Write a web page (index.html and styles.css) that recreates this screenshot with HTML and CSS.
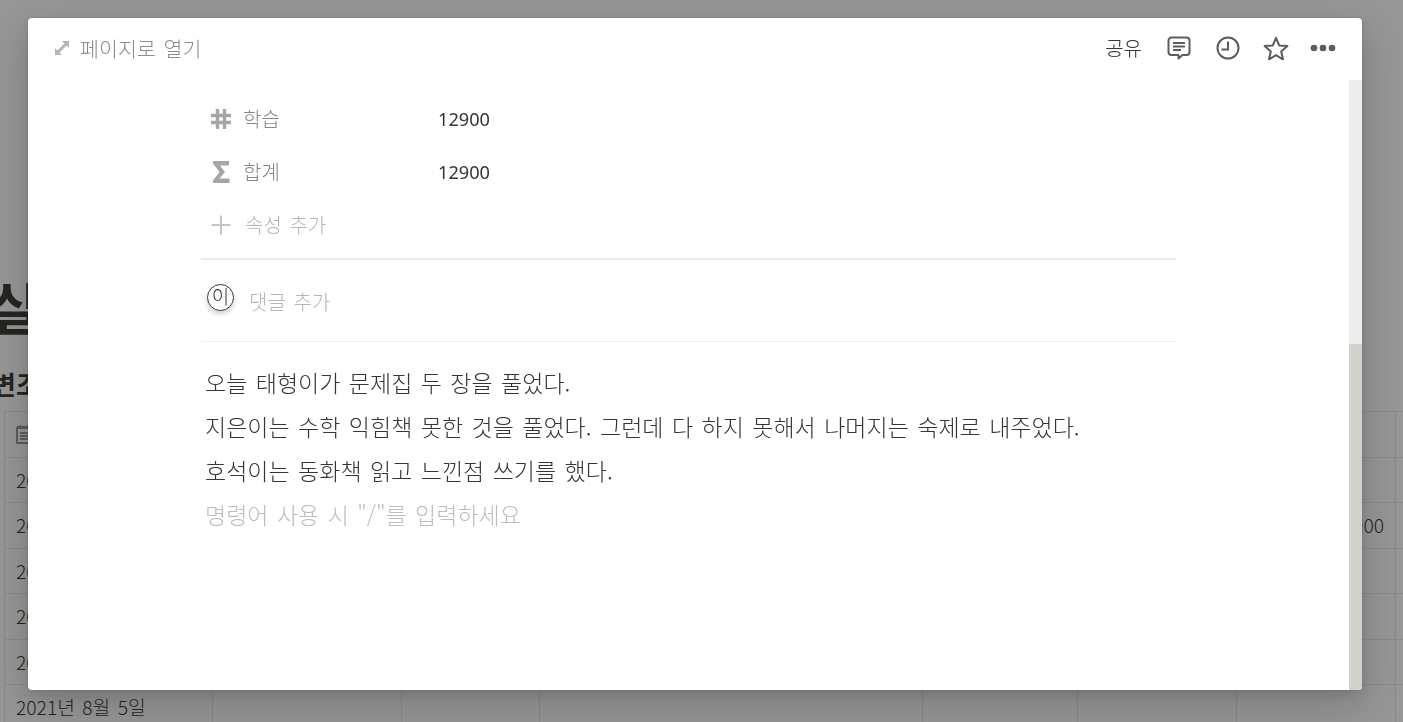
FILE: index.html
```html
<!DOCTYPE html>
<html lang="ko">
<head>
    <meta charset="UTF-8" />
    <title>페이지</title>
    <link rel="stylesheet" href="styles.css">
</head>
<body>

<!-- 뒤쪽 페이지 -->
<div class="page">
    <h1 class="page-title">실</h1>
    <h2 class="page-sub">변조</h2>
    <div class="tbl">
        <div class="tbl-row">
            <div class="tbl-cell">
                <svg class="cal-icon" width="16" height="20" viewBox="0 0 16 20">
                    <path d="M1 4h14v15H1z" fill="none" stroke="#9a9a98" stroke-width="2"/>
                    <path d="M1 3h14M4 1v3M12 1v3M4 9h8M4 12h8M4 15h8" stroke="#9a9a98" stroke-width="2"/>
                </svg>
            </div>
            <div class="tbl-cell"></div><div class="tbl-cell"></div><div class="tbl-cell"></div>
            <div class="tbl-cell"></div><div class="tbl-cell"></div><div class="tbl-cell"></div>
            <div class="tbl-cell"></div>
        </div>
        <div class="tbl-row">
            <div class="tbl-cell">2021년 8월 1일</div>
            <div class="tbl-cell"></div><div class="tbl-cell"></div><div class="tbl-cell"></div>
            <div class="tbl-cell"></div><div class="tbl-cell"></div><div class="tbl-cell"></div>
            <div class="tbl-cell"></div>
        </div>
        <div class="tbl-row">
            <div class="tbl-cell">2021년 8월 2일</div>
            <div class="tbl-cell"></div><div class="tbl-cell"></div><div class="tbl-cell"></div>
            <div class="tbl-cell"></div><div class="tbl-cell"></div>
            <div class="tbl-cell tbl-num">12900</div>
            <div class="tbl-cell"></div>
        </div>
        <div class="tbl-row">
            <div class="tbl-cell">2021년 8월 2일</div>
            <div class="tbl-cell"></div><div class="tbl-cell"></div><div class="tbl-cell"></div>
            <div class="tbl-cell"></div><div class="tbl-cell"></div><div class="tbl-cell"></div>
            <div class="tbl-cell"></div>
        </div>
        <div class="tbl-row">
            <div class="tbl-cell">2021년 8월 3일</div>
            <div class="tbl-cell"></div><div class="tbl-cell"></div><div class="tbl-cell"></div>
            <div class="tbl-cell"></div><div class="tbl-cell"></div><div class="tbl-cell"></div>
            <div class="tbl-cell"></div>
        </div>
        <div class="tbl-row">
            <div class="tbl-cell">2021년 8월 4일</div>
            <div class="tbl-cell"></div><div class="tbl-cell"></div><div class="tbl-cell"></div>
            <div class="tbl-cell"></div><div class="tbl-cell"></div><div class="tbl-cell"></div>
            <div class="tbl-cell"></div>
        </div>
        <div class="tbl-row">
            <div class="tbl-cell">2021년 8월 5일</div>
            <div class="tbl-cell"></div><div class="tbl-cell"></div><div class="tbl-cell"></div>
            <div class="tbl-cell"></div><div class="tbl-cell"></div><div class="tbl-cell"></div>
            <div class="tbl-cell"></div>
        </div>
    </div>
</div>

<div class="scrim"></div>

<!-- 모달 -->
<div class="modal">
    <div class="modal-top">
        <div class="open-page">
            <svg width="16" height="16" viewBox="0 0 16 16">
                <path d="M3.500 12.500L12.500 3.500" stroke="#b4b4b2" stroke-width="3"/>
                <path d="M8 1h7v7zM1 8v7h7z" fill="#b4b4b2"/>
            </svg>
            <span>페이지로 열기</span>
        </div>
        <div class="top-actions">
            <span class="share">공유</span>
            <svg class="comment-icon" width="24" height="24" viewBox="0 0 24 24">
                <path d="M4.500 1.500h15a3 3 0 0 1 3 3v11.500a3 3 0 0 1-3 3h-4l-4 3.500v-3.500h-7a3 3 0 0 1-3-3V4.500a3 3 0 0 1 3-3z" fill="none" stroke="#5c5c5a" stroke-width="2" stroke-linejoin="round"/>
                <path d="M6 7h12M6 10.500h12M6 14h8" stroke="#5c5c5a" stroke-width="1.800"/>
            </svg>
            <svg class="clock-icon" width="24" height="24" viewBox="0 0 24 24">
                <circle cx="12" cy="12" r="10.500" fill="none" stroke="#5c5c5a" stroke-width="2"/>
                <path d="M12 5.500v8H5.500" fill="none" stroke="#5c5c5a" stroke-width="2"/>
            </svg>
            <svg class="star-icon" width="26" height="24" viewBox="0 0 26 24">
                <path d="M13 1.800l3.200 7.600 8.200.7-6.200 5.400 1.900 8-7.100-4.300-7.100 4.300 1.900-8L1.600 10.100l8.200-.7z" fill="none" stroke="#5c5c5a" stroke-width="2" stroke-linejoin="round"/>
            </svg>
            <svg class="dots-icon" width="26" height="8" viewBox="0 0 26 8">
                <circle cx="4" cy="4" r="3.300" fill="#5c5c5a"/>
                <circle cx="13" cy="4" r="3.300" fill="#5c5c5a"/>
                <circle cx="22" cy="4" r="3.300" fill="#5c5c5a"/>
            </svg>
        </div>
    </div>

    <div class="modal-body">
        <div class="content">
            <div class="prop-row">
                <svg class="prop-icon" width="22" height="22" viewBox="0 0 22 22">
                    <path d="M7.500 1v20M14.500 1v20M1 7.500h20M1 14.500h20" stroke="#a6a6a4" stroke-width="3.400"/>
                </svg>
                <span class="prop-name">학습</span>
                <span class="prop-value">12900</span>
            </div>
            <div class="prop-row">
                <svg class="prop-icon" width="22" height="24" viewBox="0 0 22 24">
                    <path d="M3 1h16v4.500H10l5 6.500-5.500 6.500H19.500V23H3v-2.500L9.500 12 3 3.500z" fill="#a6a6a4"/>
                </svg>
                <span class="prop-name">합계</span>
                <span class="prop-value">12900</span>
            </div>
            <div class="prop-row prop-add">
                <svg class="prop-icon" width="22" height="22" viewBox="0 0 22 22">
                    <path d="M11 1.500v19M1.500 11h19" stroke="#c6c6c4" stroke-width="2"/>
                </svg>
                <span class="prop-name">속성 추가</span>
            </div>

            <div class="divider-thick"></div>

            <div class="comment-row">
                <div class="avatar">이</div>
                <span class="comment-hint">댓글 추가</span>
            </div>

            <div class="divider"></div>

            <div class="note">
                <p>오늘 태형이가 문제집 두 장을 풀었다.</p>
                <p>지은이는 수학 익힘책 못한 것을 풀었다. 그런데 다 하지 못해서 나머지는 숙제로 내주었다.</p>
                <p>호석이는 동화책 읽고 느낀점 쓰기를 했다.</p>
                <p class="note-hint">명령어 사용 시 "/"를 입력하세요</p>
            </div>
        </div>
        <div class="scrollbar">
            <div class="scroll-thumb"></div>
        </div>
    </div>
</div>

</body>
</html>
```

FILE: styles.css
```css
html, body {
    height: 100%;
}
body {
    margin: 0;
    overflow: hidden;
    background: #fff;
    color: #37352f;
    font-family: "Noto Sans CJK KR", "Noto Sans", sans-serif;
    font-weight: 300;
}

/* 뒤쪽 페이지 */
.page {
    padding-top: 275px;
}
.page-title {
    margin: 0 0 0 -11px;
    font-size: 55px;
    line-height: 60px;
    font-weight: 700;
}
.page-sub {
    margin: 31px 0 0 -8px;
    font-size: 26px;
    line-height: 36px;
    font-weight: 700;
}
.tbl {
    margin: 9px 0 0 4px;
    width: 1500px;
    border-top: 1px solid #e9e9e7;
}
.tbl-row {
    display: grid;
    grid-template-columns: 208px 189px 138px 383px 155px 159px 159px 109px;
    height: 45.5px;
    box-sizing: border-box;
    border-bottom: 1px solid #e9e9e7;
}
.tbl-cell {
    display: flex;
    align-items: center;
    padding: 0 11px;
    border-left: 1px solid #e9e9e7;
    font-size: 19.25px;
    font-weight: 300;
    word-spacing: 2px;
    white-space: nowrap;
}
.tbl-num {
    justify-content: flex-end;
}
.cal-icon {
    flex: none;
}

.scrim {
    position: fixed;
    top: 0;
    left: 0;
    right: 0;
    bottom: 0;
    background: rgba(15, 15, 15, 0.44);
}

/* 모달 */
.modal {
    position: fixed;
    left: 28px;
    top: 18px;
    width: 1334px;
    height: 672px;
    display: flex;
    flex-direction: column;
    background: #fff;
    border-radius: 4px;
    overflow: hidden;
    box-shadow: 0 0 0 1px rgba(15, 15, 15, 0.05), 0 5px 10px rgba(15, 15, 15, 0.1), 0 15px 40px rgba(15, 15, 15, 0.2);
}
.modal-top {
    flex: none;
    height: 59px;
    padding: 0 26px 3px 26px;
    display: flex;
    align-items: center;
    justify-content: space-between;
}
.open-page {
    display: flex;
    align-items: center;
    gap: 10px;
    color: #8b8b88;
    font-size: 20.6px;
    word-spacing: 2px;
}
.top-actions {
    display: flex;
    align-items: center;
    gap: 25px;
}
.share {
    font-size: 20px;
    color: #37352f;
}
.top-actions svg {
    display: block;
}
.top-actions .star-icon {
    margin-left: -2px;
}
.top-actions .dots-icon {
    margin-left: -4px;
}

.modal-body {
    flex: 1;
    min-height: 0;
    display: flex;
}
.content {
    flex: 1;
    padding: 12px 0 0 173px;
}
.scrollbar {
    flex: none;
    width: 13px;
    display: flex;
    flex-direction: column;
    justify-content: flex-end;
    background: #ededeb;
}
.scroll-thumb {
    height: 346px;
    background: #d3d1cb;
}

.prop-row {
    width: 975px;
    height: 53px;
    display: flex;
    align-items: center;
    font-size: 20px;
}
.prop-icon {
    flex: none;
    width: 22px;
    margin-left: 9px;
}
.prop-name {
    width: 195px;
    margin-left: 11px;
    color: #87867f;
    word-spacing: 2px;
}
.prop-value {
    color: #37352f;
    font-family: "Noto Sans", sans-serif;
    font-weight: 400;
    font-size: 18.2px;
}
.prop-add .prop-name {
    margin-left: 13px;
    color: #b5b5b1;
}

.divider-thick {
    width: 975px;
    height: 2px;
    margin-top: 7px;
    background: #ebebea;
}
.comment-row {
    width: 975px;
    height: 81px;
    display: flex;
    align-items: center;
}
.avatar {
    box-sizing: border-box;
    width: 27px;
    height: 27px;
    margin: -6px 0 0 6px;
    display: flex;
    align-items: center;
    justify-content: center;
    border: 1px solid #37352f;
    border-radius: 50%;
    box-shadow: 0 3px 5px rgba(15, 15, 15, 0.2);
    font-size: 19px;
    line-height: 1;
    padding-bottom: 4px;
}
.comment-hint {
    margin: 2px 0 0 15px;
    color: #b5b5b1;
    font-size: 20px;
    word-spacing: 2px;
}
.divider {
    width: 975px;
    height: 1px;
    background: #ededec;
}

.note {
    width: 975px;
    padding: 18px 0 0 4px;
    box-sizing: border-box;
    font-size: 23px;
    line-height: 44px;
    word-spacing: 2px;
}
.note p {
    margin: 0;
}
.note-hint {
    color: #bdbdbb;
}
```
